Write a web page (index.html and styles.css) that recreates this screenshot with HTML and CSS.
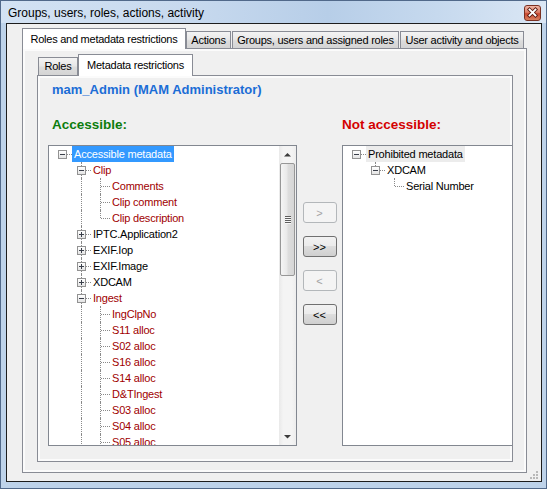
FILE: index.html
```html
<!DOCTYPE html>
<html>
<head>
<meta charset="utf-8">
<title>Groups, users, roles, actions, activity</title>
<link rel="stylesheet" href="styles.css">
</head>
<body>
<div class="window">
  <div class="titlebar">
    <span class="title">Groups, users, roles, actions, activity</span>
    <span class="close"><svg width="15" height="14" viewBox="0 0 15 14"><path d="M4.5 3.5 L10.5 9.5 M10.5 3.5 L4.5 9.5" stroke="#5a1a10" stroke-width="3.6" stroke-linecap="square"/><path d="M4.5 3.5 L10.5 9.5 M10.5 3.5 L4.5 9.5" stroke="#ffffff" stroke-width="1.8" stroke-linecap="square"/></svg></span>
  </div>
  <div class="client">
    <div class="tabctl">
      <div class="strip outer-strip">
        <div class="tab sel t1">Roles and metadata restrictions</div>
        <div class="tab t2">Actions</div>
        <div class="tab t3">Groups, users and assigned roles</div>
        <div class="tab t4">User activity and objects</div>
      </div>
      <div class="page outer-page">
        <div class="tabctl">
          <div class="strip inner-strip">
            <div class="tab i1">Roles</div>
            <div class="tab sel i2">Metadata restrictions</div>
          </div>
          <div class="page inner-page">
            <div class="role">mam_Admin (MAM Administrator)</div>
            <div class="cols heads">
              <div class="acc">Accessible:</div>
              <div></div>
              <div class="notacc">Not accessible:</div>
            </div>
            <div class="cols lists">
              <div class="box">
                <div class="tree">
                  <div class="row"><span class="c h"><i class="x m"></i></span><span class="lbl sel">Accessible metadata</span></div>
                  <div class="row"><span class="c"></span><span class="c t"><i class="x m"></i></span><span class="lbl red">Clip</span></div>
                  <div class="row"><span class="c"></span><span class="c v"></span><span class="c t"></span><span class="lbl red">Comments</span></div>
                  <div class="row"><span class="c"></span><span class="c v"></span><span class="c t"></span><span class="lbl red">Clip comment</span></div>
                  <div class="row"><span class="c"></span><span class="c v"></span><span class="c e"></span><span class="lbl red">Clip description</span></div>
                  <div class="row"><span class="c"></span><span class="c t"><i class="x p"></i></span><span class="lbl">IPTC.Application2</span></div>
                  <div class="row"><span class="c"></span><span class="c t"><i class="x p"></i></span><span class="lbl">EXIF.Iop</span></div>
                  <div class="row"><span class="c"></span><span class="c t"><i class="x p"></i></span><span class="lbl">EXIF.Image</span></div>
                  <div class="row"><span class="c"></span><span class="c t"><i class="x p"></i></span><span class="lbl">XDCAM</span></div>
                  <div class="row"><span class="c"></span><span class="c t"><i class="x m"></i></span><span class="lbl red">Ingest</span></div>
                  <div class="row"><span class="c"></span><span class="c v"></span><span class="c t"></span><span class="lbl red">IngClpNo</span></div>
                  <div class="row"><span class="c"></span><span class="c v"></span><span class="c t"></span><span class="lbl red">S11 alloc</span></div>
                  <div class="row"><span class="c"></span><span class="c v"></span><span class="c t"></span><span class="lbl red">S02 alloc</span></div>
                  <div class="row"><span class="c"></span><span class="c v"></span><span class="c t"></span><span class="lbl red">S16 alloc</span></div>
                  <div class="row"><span class="c"></span><span class="c v"></span><span class="c t"></span><span class="lbl red">S14 alloc</span></div>
                  <div class="row"><span class="c"></span><span class="c v"></span><span class="c t"></span><span class="lbl red">D&amp;TIngest</span></div>
                  <div class="row"><span class="c"></span><span class="c v"></span><span class="c t"></span><span class="lbl red">S03 alloc</span></div>
                  <div class="row"><span class="c"></span><span class="c v"></span><span class="c t"></span><span class="lbl red">S04 alloc</span></div>
                  <div class="row"><span class="c"></span><span class="c v"></span><span class="c t"></span><span class="lbl red">S05 alloc</span></div>
                </div>
                <div class="vscroll">
                  <div class="arrow"><svg width="17" height="17" viewBox="0 0 17 17"><polygon points="5,10.5 12,10.5 8.5,7" fill="#3c3c3c"/></svg></div>
                  <div class="track"><div class="thumb"><span class="grip"></span></div></div>
                  <div class="arrow"><svg width="17" height="17" viewBox="0 0 17 17"><polygon points="5,7 12,7 8.5,10.5" fill="#3c3c3c"/></svg></div>
                </div>
              </div>
              <div class="btns">
                <div class="btn dis">&gt;</div>
                <div class="btn">&gt;&gt;</div>
                <div class="btn dis">&lt;</div>
                <div class="btn">&lt;&lt;</div>
              </div>
              <div class="box right">
                <div class="tree">
                  <div class="row"><span class="c h"><i class="x m"></i></span><span class="lbl isel">Prohibited metadata</span></div>
                  <div class="row"><span class="c"></span><span class="c e"><i class="x m"></i></span><span class="lbl">XDCAM</span></div>
                  <div class="row"><span class="c"></span><span class="c"></span><span class="c e"></span><span class="lbl">Serial Number</span></div>
                </div>
              </div>
            </div>
          </div>
        </div>
      </div>
    </div>
    <div class="sizegrip"><svg width="9" height="9" viewBox="0 0 9 9"><g fill="#b8b8b8"><rect x="6" y="0" width="2" height="2"/><rect x="6" y="3" width="2" height="2"/><rect x="3" y="3" width="2" height="2"/><rect x="6" y="6" width="2" height="2"/><rect x="3" y="6" width="2" height="2"/><rect x="0" y="6" width="2" height="2"/></g></svg></div>
  </div>
</div>
</body>
</html>
```

FILE: styles.css
```css
* { box-sizing: border-box; }
html, body { margin: 0; padding: 0; }
body {
  width: 547px;
  height: 489px;
  overflow: hidden;
  font-family: "Liberation Sans", Arial, sans-serif;
  font-size: 11px;
  color: #000;
  background: #bed3ea;
}
.window {
  width: 547px;
  height: 489px;
  border: 1px solid #51698a;
  background: #bed3ea;
  padding: 0 4px 6px 5px;
  display: flex;
  flex-direction: column;
}
.titlebar {
  height: 22px;
  margin: 0 -4px 0 -5px;
  padding: 1px 5px 0 7px;
  display: flex;
  align-items: center;
  justify-content: space-between;
  background: linear-gradient(to right, #d3e2f3 0%, #c7d9ee 35%, #b7cee8 60%, #c6d9ee 80%, #dbe7f5 100%);
}
.title { font-size: 12px; color: #000; }
.close {
  width: 17px;
  height: 16px;
  border: 1px solid #7a3022;
  border-radius: 3px;
  background: linear-gradient(#efb5a6, #dc7d66 45%, #c8472f 55%, #d9805f);
  display: flex;
  align-items: center;
  justify-content: center;
}
.close svg { display: block; }
.client {
  flex: 1;
  border: 1px solid #1d1d1d;
  background: #f0f0f0;
  position: relative;
  padding: 4px 0 0 15px;
}
.strip { display: flex; align-items: flex-end; }
.outer-strip { height: 20px; }
.inner-strip { height: 21px; }
.tab {
  flex: none;
  border: 1px solid #898c95;
  border-bottom: none;
  background: linear-gradient(#f3f3f3, #e8e8e8 45%, #dcdcdc 55%, #d4d4d4);
  display: flex;
  align-items: center;
  justify-content: center;
  white-space: nowrap;
  letter-spacing: -0.25px;
}
.outer-strip .tab { height: 17px; }
.inner-strip .tab { height: 18px; padding-bottom: 2px; }
.tab.sel {
  background: #fff;
  position: relative;
  z-index: 1;
  margin-bottom: -1px;
}
.outer-strip .tab.sel { height: 21px; }
.inner-strip .tab.sel { height: 22px; }
.t1 { width: 164px; }
.t2 { width: 45px; }
.t3 { width: 167px; margin-left: 1px; }
.t4 { width: 124px; margin-left: 1px; }
.i1 { width: 40px; margin-left: 1px; }
.i2 { width: 115px; }
.page {
  border: 1px solid #898c95;
  background: #f0f0f0;
  box-shadow: inset 0 0 0 2px #fbfbfb;
}
.outer-page { width: 505px; height: 425px; padding: 5px 0 0 14px; }
.inner-page { width: 476px; height: 387px; padding: 6px 0 0 10px; }
.role {
  margin-left: 4px;
  height: 16px;
  font-weight: bold;
  font-size: 13px;
  line-height: 16px;
  color: #1b6dd6;
}
.cols { display: grid; grid-template-columns: 249px 45px 1fr; }
.heads {
  margin-top: 18px;
  height: 17px;
  font-weight: bold;
  font-size: 13.5px;
  line-height: 17px;
}
.acc { color: #0d7d0d; margin-left: 4px; }
.notacc { color: #d40000; }
.lists { margin-top: 12px; }
.box {
  height: 301px;
  border: 1px solid #828790;
  background: #fff;
  display: flex;
  overflow: hidden;
}
.box.right { border-right: none; }
.tree { flex: 1; min-width: 0; padding: 0 0 0 4px; overflow: hidden; }
.row { display: flex; height: 16px; }
.c { flex: none; width: 19px; height: 16px; position: relative; }
.c.v::before, .c.t::before {
  content: "";
  position: absolute;
  left: 9px;
  top: 0;
  height: 16px;
  border-left: 1px dotted #8a8a8a;
}
.c.e::before {
  content: "";
  position: absolute;
  left: 9px;
  top: 0;
  height: 8px;
  border-left: 1px dotted #8a8a8a;
}
.c.t::after, .c.e::after, .c.h::after {
  content: "";
  position: absolute;
  left: 10px;
  right: 0;
  top: 8px;
  border-top: 1px dotted #8a8a8a;
}
.x {
  position: absolute;
  left: 5px;
  top: 4px;
  width: 9px;
  height: 9px;
  border: 1px solid #929292;
  background: linear-gradient(#ffffff, #e4e4e4);
  z-index: 1;
}
.x::before {
  content: "";
  position: absolute;
  left: 1px;
  top: 3px;
  width: 5px;
  height: 1px;
  background: #3a3f4a;
}
.x.p::after {
  content: "";
  position: absolute;
  left: 3px;
  top: 1px;
  width: 1px;
  height: 5px;
  background: #3a3f4a;
}
.lbl {
  padding: 0 2px;
  height: 16px;
  line-height: 16px;
  white-space: nowrap;
  letter-spacing: -0.2px;
}
.lbl.red { color: #a00000; }
.lbl.sel { background: #3399ff; color: #fff; }
.lbl.isel { background: #ececec; }
.vscroll {
  flex: none;
  width: 17px;
  display: flex;
  flex-direction: column;
  background: linear-gradient(to right, #e9e9e9, #f4f4f4 25%, #f4f4f4 75%, #ededed);
}
.arrow { height: 17px; flex: none; }
.arrow svg { display: block; }
.track { flex: 1; }
.thumb {
  margin: 0 1px;
  height: 113px;
  border: 1px solid #979797;
  border-radius: 2px;
  background: linear-gradient(to right, #f5f5f5, #e9e9e9 45%, #dddddd 55%, #d6d6d6);
  display: flex;
  align-items: center;
  justify-content: center;
}
.grip {
  width: 6px;
  height: 8px;
  background: repeating-linear-gradient(#5e5e5e 0 1px, #f7f7f7 1px 2px);
}
.btns {
  display: flex;
  flex-direction: column;
  align-items: center;
  padding-top: 57px;
  gap: 13px;
}
.btn {
  width: 34px;
  height: 21px;
  border: 1px solid #707070;
  border-radius: 3px;
  background: linear-gradient(#f2f2f2, #ebebeb 50%, #dddddd 50%, #cfcfcf);
  display: flex;
  align-items: center;
  justify-content: center;
  font-size: 11px;
  color: #000;
}
.btn.dis {
  border-color: #b3b7ba;
  background: #f4f4f4;
  color: #a3a3a3;
}
.sizegrip {
  position: absolute;
  right: 2px;
  bottom: 1px;
  width: 9px;
  height: 9px;
}
.sizegrip svg { display: block; }
```
